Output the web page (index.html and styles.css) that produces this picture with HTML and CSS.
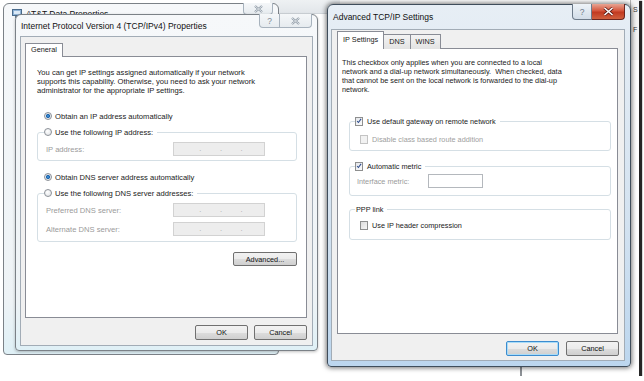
FILE: index.html
```html
<!DOCTYPE html>
<html lang="en">
<head>
    <meta charset="UTF-8">
    <title>Advanced TCP/IP Settings</title>
    <link rel="stylesheet" href="styles.css">
</head>
<body>
    <div class="screen">
        <!-- windows further back -->
        <div class="bg-strip"></div>
        <div class="bg-win"><span class="bg-s">S</span><span class="bg-f">F</span></div>
        <div class="bg-line"></div>

        <!-- AT&T Data Properties (behind) -->
        <div class="win win-back">
            <div class="titlebar">
                <svg class="app-icon" width="10" height="9" viewBox="0 0 10 9">
                    <rect x="0.5" y="0.5" width="9" height="6" fill="#8fb3d6" stroke="#4a6b8c"/>
                    <rect x="2" y="2" width="6" height="3" fill="#dbe9f6"/>
                    <rect x="3" y="7" width="4" height="2" fill="#6d7f91"/>
                </svg>
                <span class="title">AT&amp;T Data Properties</span>
                <div class="caption">
                    <span class="cap-btn cap-close">
                        <svg width="9" height="8" viewBox="0 0 9 8"><path d="M1 1 L8 7 M8 1 L1 7" stroke="#8a96a2" stroke-width="2.2"/><path d="M1 1 L8 7 M8 1 L1 7" stroke="#f4f6f8" stroke-width="0.8"/></svg>
                    </span>
                </div>
            </div>
        </div>

        <!-- IPv4 Properties -->
        <div class="win win-ipv4">
            <div class="titlebar">
                <span class="title">Internet Protocol Version 4 (TCP/IPv4) Properties</span>
                <div class="caption">
                    <span class="cap-btn cap-help">?</span>
                    <span class="cap-btn cap-close">
                        <svg width="9" height="8" viewBox="0 0 9 8"><path d="M1 1 L8 7 M8 1 L1 7" stroke="#8a96a2" stroke-width="2.2"/><path d="M1 1 L8 7 M8 1 L1 7" stroke="#f4f6f8" stroke-width="0.8"/></svg>
                    </span>
                </div>
            </div>
            <div class="client">
                <div class="tabs">
                    <span class="tab selected">General</span>
                </div>
                <div class="panel panel-general">
                    <p class="note">You can get IP settings assigned automatically if your network<br>supports this capability. Otherwise, you need to ask your network<br>administrator for the appropriate IP settings.</p>

                    <div class="opt opt-first"><span class="radio on"></span>Obtain an IP address automatically</div>
                    <div class="group group-ip">
                        <div class="legend"><span class="radio"></span>Use the following IP address:</div>
                        <div class="field">
                            <span class="field-label">IP address:</span>
                            <span class="ipbox"><i>.</i><i>.</i><i>.</i></span>
                        </div>
                    </div>

                    <div class="opt"><span class="radio on"></span>Obtain DNS server address automatically</div>
                    <div class="group group-dns">
                        <div class="legend"><span class="radio"></span>Use the following DNS server addresses:</div>
                        <div class="field">
                            <span class="field-label">Preferred DNS server:</span>
                            <span class="ipbox"><i>.</i><i>.</i><i>.</i></span>
                        </div>
                        <div class="field">
                            <span class="field-label">Alternate DNS server:</span>
                            <span class="ipbox"><i>.</i><i>.</i><i>.</i></span>
                        </div>
                    </div>

                    <div class="panel-actions">
                        <button class="btn btn-advanced">Advanced...</button>
                    </div>
                </div>
                <div class="actions">
                    <button class="btn">OK</button>
                    <button class="btn">Cancel</button>
                </div>
            </div>
        </div>

        <!-- Advanced TCP/IP Settings (active) -->
        <div class="win win-adv">
            <div class="titlebar">
                <span class="title">Advanced TCP/IP Settings</span>
                <div class="caption">
                    <span class="cap-btn cap-help">?</span>
                    <span class="cap-btn cap-close red">
                        <svg width="11" height="9" viewBox="0 0 11 9"><path d="M1.5 1 L9.5 8 M9.5 1 L1.5 8" stroke="#5a1a14" stroke-width="3"/><path d="M1.5 1 L9.5 8 M9.5 1 L1.5 8" stroke="#ffffff" stroke-width="1.6"/></svg>
                    </span>
                </div>
            </div>
            <div class="client">
                <div class="tabs">
                    <span class="tab selected">IP Settings</span>
                    <span class="tab">DNS</span>
                    <span class="tab">WINS</span>
                </div>
                <div class="panel panel-ip">
                    <p class="note">This checkbox only applies when you are connected to a local<br>network and a dial-up network simultaneously.&nbsp; When checked, data<br>that cannot be sent on the local network is forwarded to the dial-up<br>network.</p>

                    <div class="group group-gateway">
                        <div class="legend"><span class="check on"><svg width="8" height="8" viewBox="0 0 8 8"><path d="M1.5 4 L3.2 6 L6.8 1.2" fill="none" stroke="#2b4a8c" stroke-width="1.4"/></svg></span>Use default gateway on remote network</div>
                        <div class="opt sub disabled"><span class="check off"></span>Disable class based route addition</div>
                    </div>

                    <div class="group group-metric">
                        <div class="legend"><span class="check on"><svg width="8" height="8" viewBox="0 0 8 8"><path d="M1.5 4 L3.2 6 L6.8 1.2" fill="none" stroke="#2b4a8c" stroke-width="1.4"/></svg></span>Automatic metric</div>
                        <div class="field metric">
                            <span class="field-label">Interface metric:</span>
                            <span class="metric-box"></span>
                        </div>
                    </div>

                    <div class="group group-ppp">
                        <div class="legend legend-text">PPP link</div>
                        <div class="opt sub"><span class="check"></span>Use IP header compression</div>
                    </div>
                </div>
                <div class="actions">
                    <button class="btn btn-default">OK</button>
                    <button class="btn">Cancel</button>
                </div>
            </div>
        </div>
    </div>
</body>
</html>
```

FILE: styles.css
```css
body {
    margin: 0;
    background: #fff;
    font-family: "Liberation Sans", Arial, sans-serif;
    font-size: 7.3px;
    color: #1a1a1a;
}
.screen {
    position: relative;
    width: 639px;
    height: 376px;
    background: #fff;
    overflow: hidden;
    box-shadow: 2px 2px 1px 1px rgba(0,0,0,0.85);
}

/* things behind the dialogs */
.bg-strip {
    position: absolute;
    left: 270px;
    top: 0;
    width: 70px;
    height: 13px;
    background: linear-gradient(#eef1f3, #e2e6ea);
    border-bottom: 1px solid #cfd4d9;
}
.bg-win {
    position: absolute;
    left: 630px;
    top: 0;
    width: 12px;
    height: 60px;
    background: #f4f4f4;
    border-left: 1px solid #b5b5b5;
}
.bg-win span { position: absolute; left: 2px; font-size: 7px; color: #333; }
.bg-s { top: 6px; }
.bg-f { top: 26px; }
.bg-line {
    position: absolute;
    left: 520px;
    top: 360px;
    width: 2px;
    height: 16px;
    background: #8d9196;
}

/* window frames */
.win {
    position: absolute;
    box-sizing: border-box;
    display: flex;
    flex-direction: column;
    border: 1px solid #7b8187;
    border-radius: 6px 6px 4px 4px;
    background: linear-gradient(#f6f8fa, #eef3f6 85%, #dff0f6);
}
.win-back { left: 3px; top: 3px; width: 276px; height: 352px; }
.win-ipv4 { left: 15px; top: 14px; width: 303px; height: 337px; box-shadow: 0 1px 3px rgba(0,0,0,0.25); }
.win-adv {
    left: 327px;
    top: 4px;
    width: 304px;
    height: 363px;
    border-color: #3f4d5b;
    background: linear-gradient(#e7eef5, #d3e2f0 60%, #bcd6ee);
    box-shadow: 0 0 5px 1px rgba(0,0,0,0.55);
}

.titlebar {
    position: relative;
    display: flex;
    align-items: center;
    height: 21px;
    padding-left: 5px;
    flex-shrink: 0;
}
.title { font-size: 8.5px; color: #111; }
.win-back .titlebar { align-items: flex-start; padding-top: 5px; padding-left: 8px; box-sizing: border-box; }
.app-icon { margin-right: 4px; margin-top: 0; }
.win-adv .titlebar { height: 24px; }

.caption {
    position: absolute;
    top: -1px;
    right: 5px;
    display: flex;
}
.cap-btn {
    display: flex;
    align-items: center;
    justify-content: center;
    height: 14px;
    box-sizing: border-box;
    border: 1px solid #a7b2bd;
    border-top: none;
    background: linear-gradient(#f5f7f9, #e6ebef);
    color: #7f8a95;
    font-size: 8.5px;
}
.cap-help { width: 21px; border-radius: 0 0 0 4px; }
.cap-close { width: 32px; border-left: none; border-radius: 0 0 4px 0; }
.win-back .caption { top: -1px; }
.win-back .cap-close { width: 30px; height: 12px; border-left: 1px solid #a7b2bd; border-radius: 0 0 4px 4px; }
.win-adv .caption { right: 5px; }
.win-adv .cap-btn { height: 16px; border-color: #6d7b8a; }
.win-adv .cap-help { width: 20px; background: linear-gradient(#eef3f8, #d2dde8); color: #6d7b8a; }
.cap-close.red {
    width: 33px;
    border-color: #6b2620;
    background: linear-gradient(#e8a493, #d5573d 45%, #c23a21 55%, #d0603e);
}

/* client area */
.client {
    flex: 1;
    display: flex;
    flex-direction: column;
    margin: 0 4px 4px 4px;
    border: 1px solid #a2acb6;
    background: #f0f0f0;
    padding: 6px 5px 0 4px;
}
.win-ipv4 .client { font-size: 7.6px; }
.win-adv .client { margin: 0 5px 5px 3px; padding: 1px 5px 0 5px; }

.tabs { display: flex; align-items: flex-end; }
.tab {
    position: relative;
    z-index: 1;
    box-sizing: border-box;
    height: 13px;
    line-height: 12px;
    padding: 0 6px;
    border: 1px solid #898c95;
    border-bottom: none;
    background: linear-gradient(#f3f3f3, #e3e3e3);
    margin-bottom: -1px;
}
.tab.selected { background: #fff; height: 14px; }
.win-ipv4 .tab { width: 38px; padding: 0 0 0 5px; font-size: 7.3px; }
.win-adv .tab.selected { height: 18px; line-height: 16px; padding: 0 5px; }
.win-adv .tab:not(.selected) { height: 15px; line-height: 13px; border-left: none; padding: 0 5px; }

.panel {
    box-sizing: border-box;
    background: #fff;
    border: 1px solid #898c95;
}
.panel-general { width: 282px; height: 262px; padding: 11px 9px 0 11px; }
.panel-ip { width: 281px; height: 286px; padding: 9px 0 0 0; }

.note { margin: 0; line-height: 9px; white-space: nowrap; }
.panel-ip .note { padding-left: 4px; }

.opt { display: flex; align-items: center; height: 10px; margin: 11px 0 0 7px; }
.opt-first { margin-top: 16px; }

.radio {
    box-sizing: border-box;
    width: 8px;
    height: 8px;
    margin-right: 3px;
    border-radius: 50%;
    border: 1px solid #8b9097;
    background: radial-gradient(circle at 40% 35%, #ffffff, #dcdfe3);
    flex-shrink: 0;
}
.radio.on {
    background: radial-gradient(circle, #4aa1e0 0, #1a5ea8 1.8px, #e9ecef 2.3px, #dfe2e6);
}

.check {
    display: flex;
    align-items: center;
    justify-content: center;
    box-sizing: border-box;
    width: 8px;
    height: 9px;
    margin-right: 4px;
    border: 1px solid #8e8f8f;
    background: linear-gradient(135deg, #dcdcdc, #f6f6f6);
    flex-shrink: 0;
}
.check.on { background: linear-gradient(135deg, #e4e6ea, #fbfbfb); }
.check.off { border-color: #c4c4c4; background: #f2f2f2; }

.group {
    border: 1px solid #d5dfe5;
    border-radius: 3px;
    margin-top: 11px;
}
.legend {
    display: flex;
    align-items: center;
    width: fit-content;
    height: 10px;
    margin: -6px 0 0 6px;
    padding-right: 4px;
    background: #fff;
}
.group-ip { padding-bottom: 4px; }
.group-dns { padding-bottom: 5px; }

.field {
    display: flex;
    align-items: center;
    height: 14px;
    margin-top: 5px;
    padding-left: 8px;
    color: #9a9a9a;
}
.field-label { width: 127px; }
.ipbox {
    display: flex;
    justify-content: space-around;
    box-sizing: border-box;
    width: 92px;
    height: 14px;
    padding: 0 12px 0 16px;
    border: 1px solid #d2d2d2;
    background: #ededed;
    line-height: 12px;
}
.ipbox i { font-style: normal; color: #a8a8a8; }

.panel-actions { display: flex; justify-content: flex-end; margin-top: 10px; }

/* advanced tab */
.group-gateway { margin: 27px 0 0 11px; width: 260px; padding-bottom: 6px; }
.group-metric { margin: 15px 0 0 11px; width: 260px; padding-bottom: 7px; }
.group-ppp { margin: 13px 0 0 11px; width: 260px; padding-bottom: 9px; }
.panel-ip .legend { margin-left: 5px; }
.legend-text { padding-left: 1px; }
.opt.sub { margin: 8px 0 0 10px; }
.group-ppp .opt.sub { margin-top: 6px; }
.disabled { color: #a0a0a0; }
.field.metric { margin-top: 3px; padding-left: 7px; }
.metric .field-label { width: 71px; }
.metric-box {
    box-sizing: border-box;
    width: 55px;
    height: 14px;
    border: 1px solid #b4b8bd;
    background: #fff;
}

/* buttons */
.btn {
    box-sizing: border-box;
    height: 15px;
    width: 53px;
    padding: 0;
    font-family: inherit;
    font-size: 7.3px;
    color: #111;
    border: 1px solid #707070;
    border-radius: 2px;
    background: linear-gradient(#f2f2f2, #ebebeb 50%, #dddddd 51%, #cfcfcf);
}
.btn-advanced { width: 64px; height: 14px; }
.btn-default { border-color: #3c8ccf; box-shadow: inset 0 0 0 1px #a9dcf8; }
.actions { display: flex; justify-content: flex-end; gap: 6px; margin-top: 7px; }
.win-adv .actions { gap: 7px; padding-right: 0; }
```
